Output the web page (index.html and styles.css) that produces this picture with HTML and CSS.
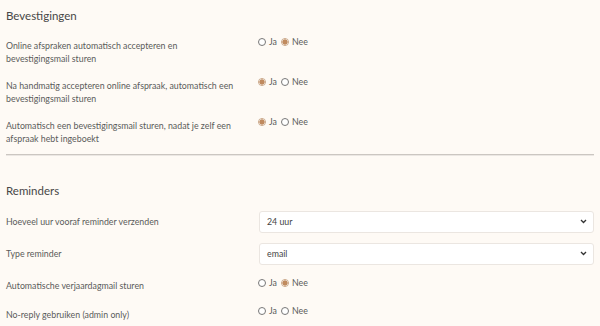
FILE: index.html
```html
<!DOCTYPE html>
<html lang="nl">
<head>
<meta charset="utf-8">
<link rel="stylesheet" href="styles.css">
</head>
<body>
<div class="page">
  <h2 class="title">Bevestigingen</h2>
  <div class="rows">
    <div class="row">
      <div class="label">Online afspraken automatisch accepteren en<br>bevestigingsmail sturen</div>
      <div class="radios">
        <label class="opt"><span class="radio"></span>Ja</label>
        <label class="opt"><span class="radio on"></span>Nee</label>
      </div>
    </div>
    <div class="row">
      <div class="label">Na handmatig accepteren online afspraak, automatisch een<br>bevestigingsmail sturen</div>
      <div class="radios">
        <label class="opt"><span class="radio on"></span>Ja</label>
        <label class="opt"><span class="radio"></span>Nee</label>
      </div>
    </div>
    <div class="row">
      <div class="label">Automatisch een bevestigingsmail sturen, nadat je zelf een<br>afspraak hebt ingeboekt</div>
      <div class="radios">
        <label class="opt"><span class="radio on"></span>Ja</label>
        <label class="opt"><span class="radio"></span>Nee</label>
      </div>
    </div>
  </div>
  <hr class="sep">
  <h2 class="title title2">Reminders</h2>
  <div class="rows2">
    <div class="row srow">
      <div class="label">Hoeveel uur vooraf reminder verzenden</div>
      <div class="select"><span>24 uur</span><svg class="chev" viewBox="0 0 8 6" width="7" height="5"><path d="M1 1.2 L4 4.2 L7 1.2" fill="none" stroke="#333" stroke-width="1.6"/></svg></div>
    </div>
    <div class="row srow">
      <div class="label">Type reminder</div>
      <div class="select"><span>email</span><svg class="chev" viewBox="0 0 8 6" width="7" height="5"><path d="M1 1.2 L4 4.2 L7 1.2" fill="none" stroke="#333" stroke-width="1.6"/></svg></div>
    </div>
    <div class="row rrow">
      <div class="label">Automatische verjaardagmail sturen</div>
      <div class="radios">
        <label class="opt"><span class="radio"></span>Ja</label>
        <label class="opt"><span class="radio on"></span>Nee</label>
      </div>
    </div>
    <div class="row rrow">
      <div class="label">No-reply gebruiken (admin only)</div>
      <div class="radios">
        <label class="opt"><span class="radio"></span>Ja</label>
        <label class="opt"><span class="radio"></span>Nee</label>
      </div>
    </div>
  </div>
</div>
</body>
</html>
```
FILE: styles.css
```css
html, body {
  margin: 0;
  padding: 0;
  background: #fefaf5;
}
.page {
  padding: 8px 6px 0 6px;
  font-family: Lato, "Open Sans", sans-serif;
  color: #555;
}
.title {
  margin: 0;
  font-size: 11.5px;
  line-height: 16px;
  font-weight: 400;
  color: #474747;
}
.rows {
  display: flex;
  flex-direction: column;
  gap: 14px;
  margin-top: 14.5px;
}
.row {
  display: grid;
  grid-template-columns: 252px 1fr;
  align-items: start;
}
.label {
  font-size: 8.8px;
  line-height: 13px;
  color: #5a5a5a;
}
.radios {
  display: flex;
  gap: 4px;
  font-size: 8.8px;
  line-height: 8px;
  color: #5a5a5a;
  margin-top: -0.5px;
}
.opt {
  display: flex;
  align-items: center;
  gap: 3px;
}
.radio {
  box-sizing: border-box;
  width: 8px;
  height: 8px;
  border-radius: 50%;
  border: 1px solid #777;
  background: #fff;
}
.radio.on {
  border-color: #c9a585;
  background: radial-gradient(circle, #c08a5e 0 2.4px, #fff 2.8px);
}
.sep {
  margin: 9px 0 0 0;
  border: 0;
  border-top: 1px solid #cbc6c1;
  border-bottom: 1px solid #ebe7e3;
  height: 0;
}
.title2 {
  margin-top: 27px;
}
.rows2 {
  display: flex;
  flex-direction: column;
  margin-top: 12px;
}
.srow {
  align-items: center;
  margin-bottom: 10px;
}
.rrow {
  margin-top: 4.5px;
  margin-bottom: 11px;
}
.select {
  box-sizing: border-box;
  height: 22px;
  margin-left: 1px;
  background: #fff;
  border: 1px solid #ebe6e1;
  border-radius: 3px;
  display: flex;
  align-items: center;
  justify-content: space-between;
  padding: 0 6px 0 7px;
  font-size: 8.8px;
  color: #444;
}
.chev {
  display: block;
}
```
